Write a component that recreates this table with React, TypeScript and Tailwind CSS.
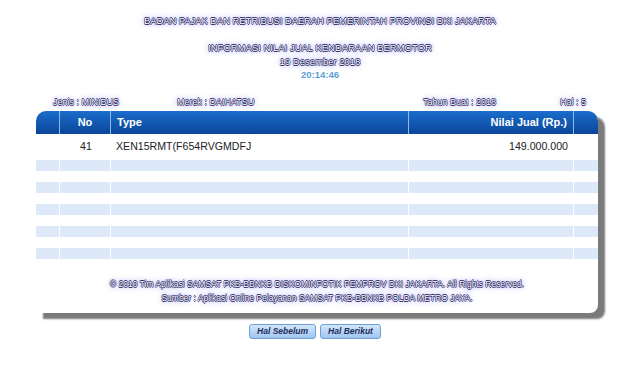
import React from "react";

const glow =
  "text-white [text-shadow:0.6px_0_0_#23235e,-0.6px_0_0_#23235e,0_0.6px_0_#23235e,0_-0.6px_0_#23235e,0_0_5px_#8f84ff,0_0_10px_#b3abff]";

const cols = "grid grid-cols-[23px_51px_298px_165px_25px]";

export default function App() {
  const emptyRows = Array.from({ length: 9 }, (_, i) => i);

  return (
    <div className="min-h-[366px] w-[640px] bg-white font-['Liberation_Sans',Arial,sans-serif]">
      <div className="flex flex-col items-center pt-[15px]">
        <div className={`text-[9.5px] leading-[12px] tracking-[-0.1px] ${glow}`}>
          BADAN PAJAK DAN RETRIBUSI DAERAH PEMERINTAH PROVINSI DKI JAKARTA
        </div>
        <div className={`mt-[14px] text-[9.5px] leading-[13.5px] ${glow}`}>
          INFORMASI NILAI JUAL KENDARAAN BERMOTOR
        </div>
        <div className={`text-[9.5px] leading-[13.5px] ${glow}`}>19 Desember 2018</div>
        <div className="text-[9.5px] font-bold leading-[13.5px] text-[#5c9fd6]">20:14:46</div>
      </div>

      <div className="ml-[36px] w-[562px]">
        <div className={`mt-[14px] flex h-[14px] items-center text-[9px] ${glow}`}>
          <span className="ml-[17px] w-[124px]">Jenis : MINIBUS</span>
          <span>Merek : DAIHATSU</span>
          <span className="ml-auto w-[137px]">Tahun Buat : 2018</span>
          <span className="mr-[12px]">Hal : 5</span>
        </div>

        <div className="mt-[1px] rounded-t-[10px] rounded-br-[8px] bg-white shadow-[7px_6px_2px_#7a7a7a]">
          <div
            className={`${cols} h-[23px] items-stretch rounded-t-[10px] bg-gradient-to-b from-[#1b6dcc] to-[#0a4699] text-[11px] font-bold text-white`}
          >
            <div />
            <div className="flex items-center justify-center border-l border-[#8db8ea]">No</div>
            <div className="flex items-center border-l border-[#8db8ea] pl-[6px]">Type</div>
            <div className="flex items-center justify-end border-l border-[#8db8ea] pr-[6px]">
              Nilai Jual (Rp.)
            </div>
            <div className="border-l border-[#8db8ea]" />
          </div>

          <div className={`${cols} h-[26px] items-center text-[10.6px] text-[#222]`}>
            <div />
            <div className="pl-[21px]">41</div>
            <div className="pl-[6px]">XEN15RMT(F654RVGMDFJ</div>
            <div className="pr-[5px] text-right">149.000.000</div>
            <div />
          </div>

          {emptyRows.map((i) => (
            <div key={i} className={`${cols} h-[11px]`}>
              {[0, 1, 2, 3, 4].map((c) => (
                <div
                  key={c}
                  className={`${i % 2 === 0 ? "bg-[#dde9f8]" : "bg-white"} ${c > 0 ? "border-l border-white" : ""}`}
                />
              ))}
            </div>
          ))}

          <div className={`flex flex-col items-center pt-[18px] pb-[8px] text-[8.5px] leading-[14px] ${glow}`}>
            <div>
              © 2010 Tim Aplikasi SAMSAT PKB-BBNKB DISKOMINFOTIK PEMPROV DKI JAKARTA. All Rights Reserved.
            </div>
            <div>Sumber : Aplikasi Online Pelayanan SAMSAT PKB-BBNKB POLDA METRO JAYA.</div>
          </div>
        </div>
      </div>

      <div className="mt-[11px] flex justify-center gap-[4px] pr-[10px]">
        {["Hal Sebelum", "Hal Berikut"].map((label) => (
          <button
            key={label}
            className="h-[15px] rounded-[3px] border border-[#6f9fd6] bg-gradient-to-b from-[#d3e6fa] to-[#9ec6f0] px-[7px] text-[8.5px] font-bold italic leading-[13px] text-[#1c2b5c]"
          >
            {label}
          </button>
        ))}
      </div>
    </div>
  );
}
